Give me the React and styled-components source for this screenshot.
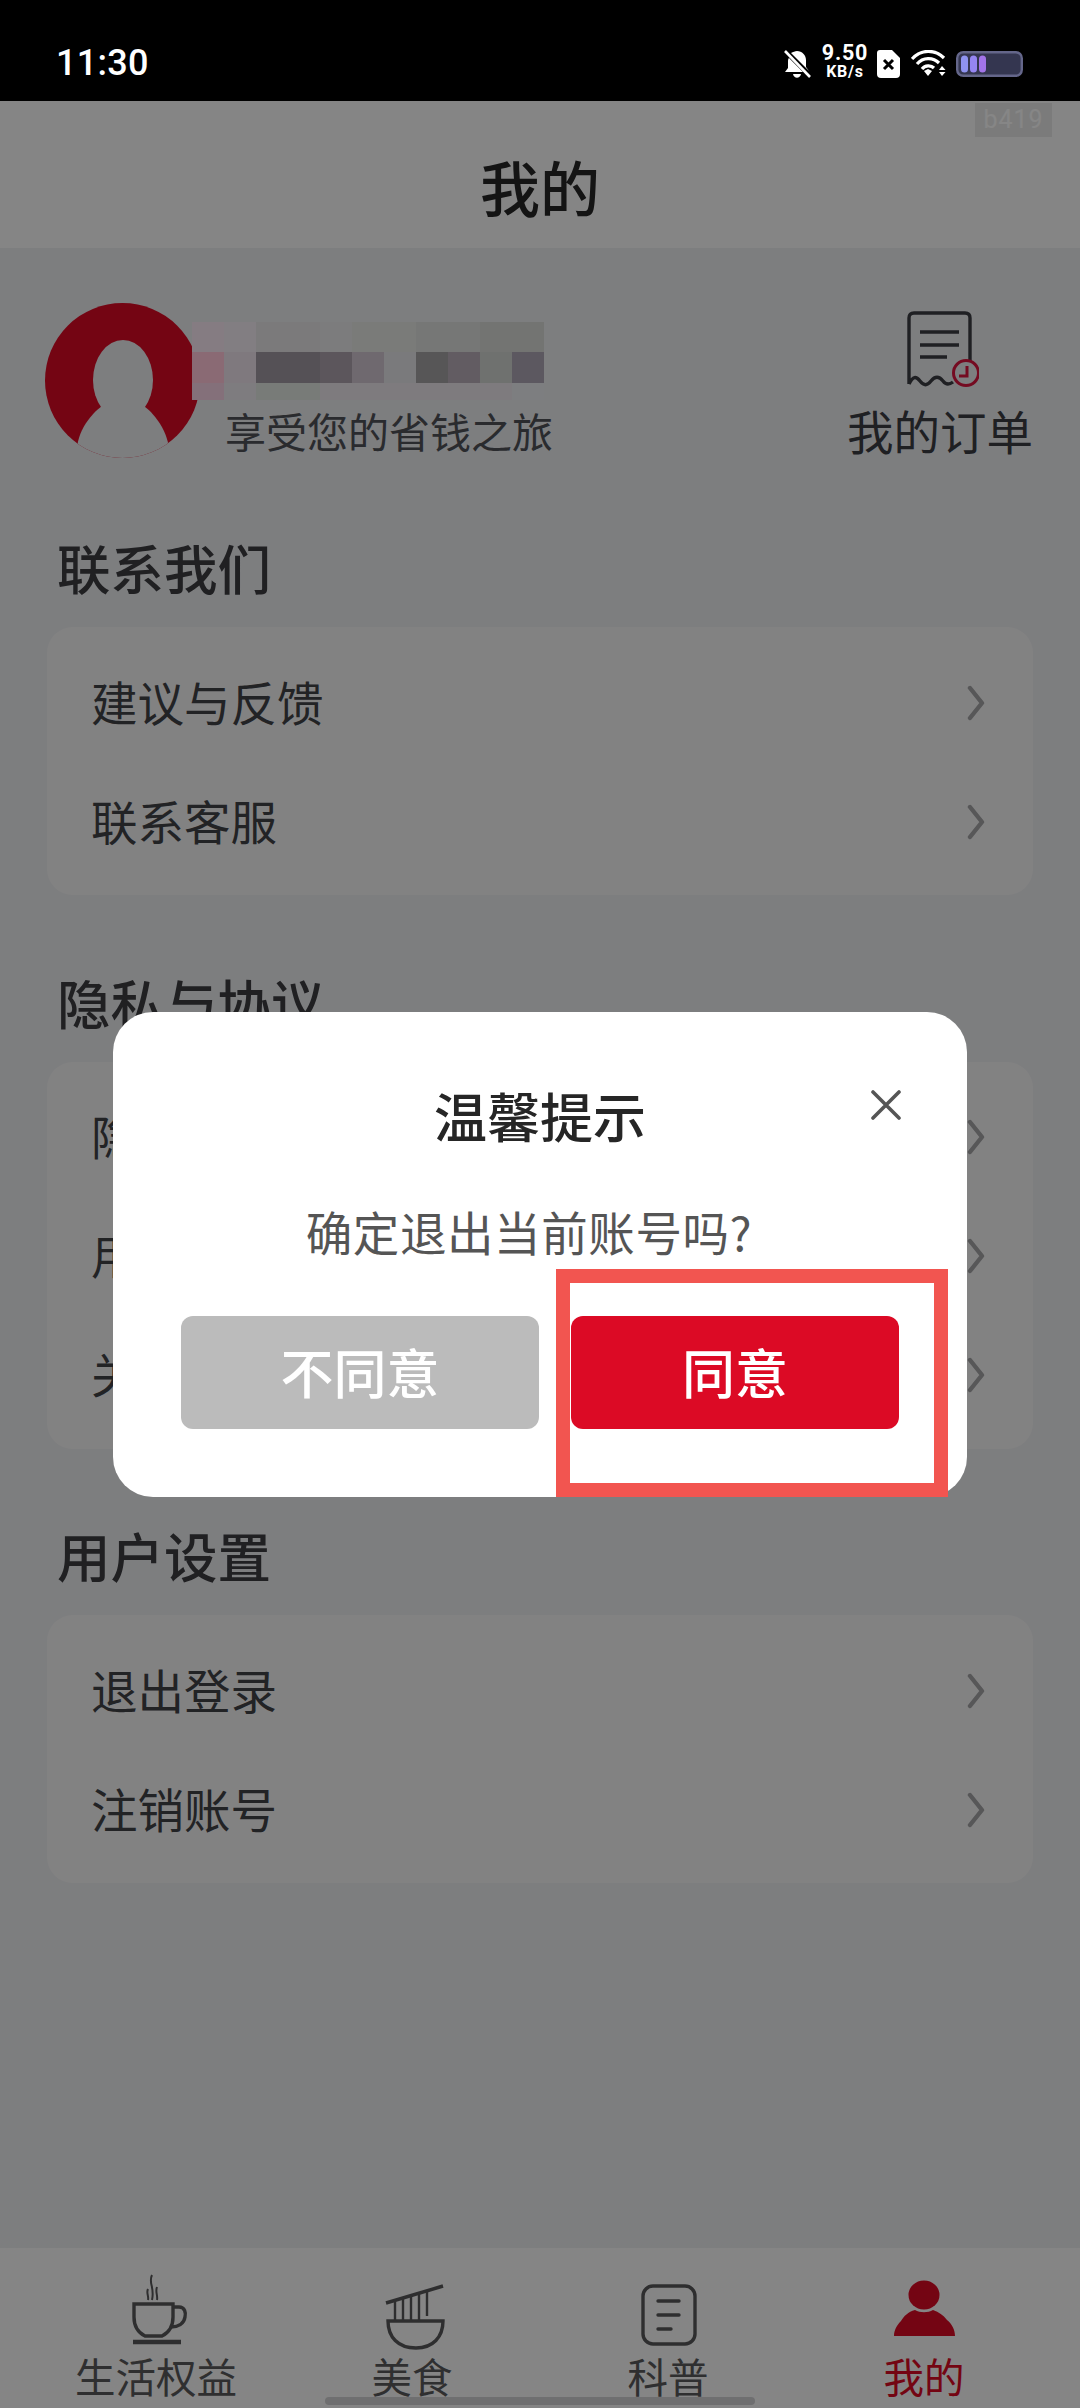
import React from "react";
import styled, { createGlobalStyle } from "styled-components";

const Global = createGlobalStyle`
  html, body { margin: 0; padding: 0; background: #000; }
  * { box-sizing: border-box; }
`;
const CJK = `"Noto Sans CJK SC", "Noto Sans", sans-serif`;

const Phone = styled.div`
  position: relative; width: 1080px; height: 2408px; overflow: hidden;
  display: flex; flex-direction: column; background: #eeeff2; font-family: ${CJK};
`;
const StatusBar = styled.div`
  position: relative; z-index: 3; height: 101px; flex: none; background: #000; color: #fff;
  display: flex; align-items: center; padding: 0 57px 0 56px;
`;
const Clock = styled.div`
  font: 500 36px/1 Roboto, sans-serif; letter-spacing: .3px; flex: 1; margin-top: 24px;
`;
const StatusIcons = styled.div`
  display: flex; align-items: center; margin-top: 26px;
`;
const Speed = styled.div`
  width: 46px; margin: -5px 9px 0 11px; text-align: center; font-family: Roboto, sans-serif; font-weight: 700;
  display: flex; flex-direction: column; align-items: center;
`;
const SpeedValue = styled.span` font-size: 21.5px; line-height: 21px; letter-spacing: .8px; white-space: nowrap; `;
const SpeedUnit = styled.span` font-size: 16px; line-height: 18px; letter-spacing: .8px; white-space: nowrap; `;
const Header = styled.header`
  position: relative; height: 147px; flex: none; background: #fdfdfd;
  display: flex; align-items: center; justify-content: center;
`;
const Title = styled.h1`
  margin: 22px 0 0; font-size: 60px; line-height: 76px; font-weight: 500; color: #262626;
`;
const BuildBadge = styled.div`
  position: absolute; right: 28px; top: 2px; width: 77px; height: 34px; background: #ebebeb; color: #fff;
  font: 400 25px/34px Roboto, sans-serif; text-align: center; letter-spacing: 1px;
`;
const Body = styled.main`
  flex: 1; padding: 55px 47px 0; display: flex; flex-direction: column;
`;
const Profile = styled.section`
  height: 158px; display: flex; align-items: flex-start; position: relative; margin-bottom: 79px;
`;
const Avatar = styled.svg`
  width: 155px; height: 155px; flex: none; margin-left: -2px;
`;
const Slogan = styled.div`
  margin: 106px 0 0 25px; font-size: 41px; line-height: 42px; color: #505259; flex: 1; white-space: nowrap;
`;
const Orders = styled.div`
  width: 186px; display: flex; flex-direction: column; align-items: center;
  font-size: 46.5px; line-height: 52px; color: #3c3d44; white-space: nowrap;
`;
const OrderIcon = styled.svg`
  width: 80px; height: 84px; margin: 7px 0 10px; margin-left: -2px;
`;
const SectionTitle = styled.h2`
  margin: 0 0 27px 10px; font-size: 53.5px; line-height: 54px; height: 60px; font-weight: 500; color: #3d3e42;
`;
const Card = styled.div`
  background: #f8f8f8; border-radius: 26px; padding: 16px 0 14px; margin-bottom: 79.5px;
  display: flex; flex-direction: column;
`;
const Row = styled.div`
  height: 119px; display: flex; align-items: center; justify-content: space-between; padding: 0 48px 5px 44px;
  font-size: 46.5px; color: #424348;
`;
const Chevron = styled.svg` width: 18px; height: 36px; margin-top: 5px; `;
const TabBar = styled.nav`
  height: 160px; flex: none; background: #fdfdfd; display: grid; grid-template-columns: repeat(4, 256px);
  padding-left: 28px;
`;
const Tab = styled.div`
  display: flex; flex-direction: column; align-items: center; color: ${p => (p.$active ? "#dc0a25" : "#5a5a5c")};
  font-size: 40.5px; line-height: 44px;
`;
const TabIcon = styled.svg`
  width: 80px; height: 88px; margin-top: 22px; margin-bottom: -4px; flex: none;
`;
const Scrim = styled.div`
  position: absolute; inset: 0; background: rgba(0, 0, 0, 0.475); z-index: 1;
  display: flex; justify-content: center; padding-top: 1012px;
`;
const HomeBar = styled.div`
  position: absolute; z-index: 2; left: 325px; top: 2397px; width: 430px; height: 8px; border-radius: 4px; background: #6f6f70;
`;
const Mosaic = styled.div`
  position: absolute; z-index: 2; left: 192px; top: 322px; display: grid;
  grid-template-columns: repeat(11, 32px); grid-template-rows: 30px 31px 17px;
`;
const Cell = styled.i` display: block; background: ${p => p.$c}; `;
const Modal = styled.div`
  position: relative; z-index: 3; width: 854px; height: 485px; background: #fff; border-radius: 40px;
  padding: 76px 68px 0; display: flex; flex-direction: column; align-items: center;
`;
const ModalTitle = styled.div`
  font-size: 53px; line-height: 60px; font-weight: 500; color: #262626; margin-top: -3px; margin-bottom: 3px;
`;
const Close = styled.svg`
  position: absolute; left: 758px; top: 78px; width: 30px; height: 30px;
`;
const Message = styled.div`
  margin: 53px 22px 0 0; font-size: 46.5px; line-height: 60px; color: #555; white-space: nowrap; letter-spacing: .6px;
`;
const Actions = styled.div`
  margin-top: 55px; width: 100%; display: grid; grid-template-columns: 358px 328px; gap: 32px;
`;
const Action = styled.div`
  height: 113px; border-radius: 12px; background: ${p => (p.$primary ? "#dc0a25" : "#bbbbbb")}; color: #fff;
  display: flex; align-items: center; justify-content: center; font-size: 53px; font-weight: 500; padding-bottom: 4px;
`;
const Highlight = styled.div`
  position: absolute; left: 443px; top: 257px; width: 392px; height: 228px; border: 14px solid #f25550;
`;

const mosaic = [
  "#857c82 #827e82 #7b7a7b #7b7a7b #7c7c7d #7a7b79 #7a7b79 #767776 #767776 #737472 #737472",
  "#8a6a74 #7f797e #555156 #555156 #5c565c #6f696f #7a7a7c #575657 #625c62 #6f716f #5c5860",
  "#84707a #7e7c7f #787b78 #787b78 #7e7b7e #7e7b7e #7e7b7e #7e7b7e #7e7b7e #7e7b7e #7d7e80",
].flatMap(r => r.split(" "));

const ChevronIcon = () => (
  <Chevron viewBox="0 0 18 36" fill="none" stroke="#a6a6a8" strokeWidth="4.4" strokeLinecap="round" strokeLinejoin="round">
    <path d="M3 3 L15 18 L3 33" />
  </Chevron>
);
const ListRow = ({ children }) => <Row>{children}<ChevronIcon /></Row>;

const CupIcon = () => (
  <TabIcon viewBox="0 0 80 88" fill="none" stroke="#58585a" strokeWidth="3.4">
    <g transform="translate(3 -3)">
      <path d="M15 37 H54 V50 C54 60 49 66 43 69 H26 C20 66 15 60 15 50 Z" />
      <path d="M54 40 H60 C66 40 67 46 66 50 C65 57 59 60 52 60" />
      <path d="M14 75 H62" strokeWidth="4.4" />
      <path d="M33 8 C29 16 36 20 33 33 M29 22 C27 26 30 29 29 33 M38 20 C36 25 39 28 38 33" strokeWidth="2" />
    </g>
  </TabIcon>
);
const BowlIcon = () => (
  <TabIcon viewBox="0 0 80 88" fill="none" stroke="#58585a" strokeWidth="3.4">
    <g transform="translate(3 4)">
      <path d="M13 47 H68 C68 63 58 74 41 74 C23 74 13 63 13 47 Z" />
      <path d="M11 29 L68 12" />
      <path d="M20 27 V47 M28 25 V47 M36 22 V47 M44 20 V47 M52 17 V42" strokeWidth="2.4" />
    </g>
  </TabIcon>
);
const DocIcon = () => (
  <TabIcon viewBox="0 0 80 88" fill="none" stroke="#58585a" strokeWidth="3.4" strokeLinecap="round">
    <rect x="15" y="16" width="52" height="58" rx="10" />
    <path d="M30 31 H51 M30 45 H51 M30 59 H43" />
  </TabIcon>
);
const PersonIcon = () => (
  <TabIcon viewBox="0 0 80 88" fill="#dc0a25">
    <ellipse cx="40" cy="25" rx="15.5" ry="14.5" />
    <path d="M31 40 C24 42 20 46 17 51 C13 55 10 60 10 66 H71 C71 60 68 54 63 50 C59 45 55 42 49 40 C44 43 36 43 31 40 Z" />
  </TabIcon>
);

export default function App() {
  return (
    <Phone>
      <Global />
      <StatusBar>
        <Clock>11:30</Clock>
        <StatusIcons>
          <svg width="27" height="28" viewBox="0 0 27 28">
            <path fill="#fff" d="M5 8 C4 9 4 10 4 12 V18 L1 22 H19 Z M7 3 L25 21 L22 17 V10 C22 5 18 1 13 1 C11 1 9 2 7 3 Z M9 24 C10 29 16 29 17 24 Z" />
            <path stroke="#fff" strokeWidth="2.6" d="M1 1 L26 27" />
          </svg>
          <Speed><SpeedValue>9.50</SpeedValue><SpeedUnit>KB/s</SpeedUnit></Speed>
          <svg width="23" height="28" viewBox="0 0 23 28">
            <path fill="#fff" d="M3 0 H15 L23 8 V24 A4 4 0 0 1 19 28 H4 A4 4 0 0 1 0 24 V3 A3 3 0 0 1 3 0 Z" />
            <path stroke="#000" strokeWidth="3" d="M7 10 L16 19 M16 10 L7 19" />
          </svg>
          <svg width="36" height="27" viewBox="0 0 36 27" fill="none" stroke="#fff" style={{ marginLeft: 11 }}>
            <path strokeWidth="3.2" d="M1 9 C10 -1 24 -1 33 8" />
            <path strokeWidth="3.2" d="M6 14 C12 7 22 7 28 13" />
            <path strokeWidth="3.2" d="M11 19 C14 15 20 15 23 18" />
            <path fill="#fff" stroke="none" d="M13 21 L17 19 L21 21 L17 26 Z M31 16 L34.5 20 H28 Z M28 22 H34.5 L31 26 Z" />
          </svg>
          <svg width="67" height="26" viewBox="0 0 67 26" style={{ marginLeft: 9 }}>
            <rect x="1.2" y="1.2" width="64.6" height="23.6" rx="6" fill="#343650" stroke="#64668a" strokeWidth="2.4" />
            <rect x="5" y="4.5" width="7" height="17" rx="3.5" fill="#8f93f0" />
            <rect x="14" y="4.5" width="7" height="17" rx="3.5" fill="#9585f2" />
            <rect x="23" y="4.5" width="7" height="17" rx="3.5" fill="#a274e8" />
          </svg>
        </StatusIcons>
      </StatusBar>
      <Header>
        <Title>我的</Title>
        <BuildBadge>b419</BuildBadge>
      </Header>
      <Body>
        <Profile>
          <Avatar viewBox="0 0 155 155">
            <defs>
              <clipPath id="av"><circle cx="77.5" cy="77.5" r="77.5" /></clipPath>
            </defs>
            <g clipPath="url(#av)">
              <rect width="155" height="155" fill="#dc0a25" />
              <ellipse cx="78" cy="77" rx="30" ry="40" fill="#eeeff2" />
              <path fill="#eeeff2" d="M62 100 C50 106 33 125 32 146 L32 155 H124 V146 C122 125 106 106 94 100 Z" />
            </g>
          </Avatar>
          <Slogan>享受您的省钱之旅</Slogan>
          <Orders>
            <OrderIcon viewBox="0 0 80 84" fill="none">
              <path stroke="#3c3d44" strokeWidth="3.4" strokeLinejoin="round" d="M10 74 V8 Q10 3 15 3 H66 Q71 3 71 8 V52 M10 74 C14 66 17 66 21 71 C25 76 28 76 32 71 C36 66 40 66 44 71 C47 75 50 75 54 72" />
              <path stroke="#3c3d44" strokeWidth="3.4" d="M21 22 H60 M21 35 H60 M21 47 H48" />
              <circle cx="67" cy="63" r="12.5" stroke="#dc1640" strokeWidth="3" />
              <path stroke="#dc1640" strokeWidth="3" d="M68 56 V66 H60" />
            </OrderIcon>
            我的订单
          </Orders>
        </Profile>
        <section>
          <SectionTitle>联系我们</SectionTitle>
          <Card>
            <ListRow>建议与反馈</ListRow>
            <ListRow>联系客服</ListRow>
          </Card>
        </section>
        <section>
          <SectionTitle>隐私与协议</SectionTitle>
          <Card>
            <ListRow>隐私政策</ListRow>
            <ListRow>用户协议</ListRow>
            <ListRow>关于我们</ListRow>
          </Card>
        </section>
        <section>
          <SectionTitle>用户设置</SectionTitle>
          <Card>
            <ListRow>退出登录</ListRow>
            <ListRow>注销账号</ListRow>
          </Card>
        </section>
      </Body>
      <TabBar>
        <Tab><CupIcon />生活权益</Tab>
        <Tab><BowlIcon />美食</Tab>
        <Tab><DocIcon />科普</Tab>
        <Tab $active><PersonIcon />我的</Tab>
      </TabBar>
      <Mosaic>
        {mosaic.map((c, i) => <Cell key={i} $c={c} />)}
      </Mosaic>
      <HomeBar />
      <Scrim>
        <Modal>
          <ModalTitle>温馨提示</ModalTitle>
          <Close viewBox="0 0 30 30" stroke="#555" strokeWidth="3.6" strokeLinecap="round">
            <path d="M2 2 L28 28 M28 2 L2 28" />
          </Close>
          <Message>确定退出当前账号吗?</Message>
          <Actions>
            <Action>不同意</Action>
            <Action $primary>同意</Action>
          </Actions>
          <Highlight />
        </Modal>
      </Scrim>
    </Phone>
  );
}
